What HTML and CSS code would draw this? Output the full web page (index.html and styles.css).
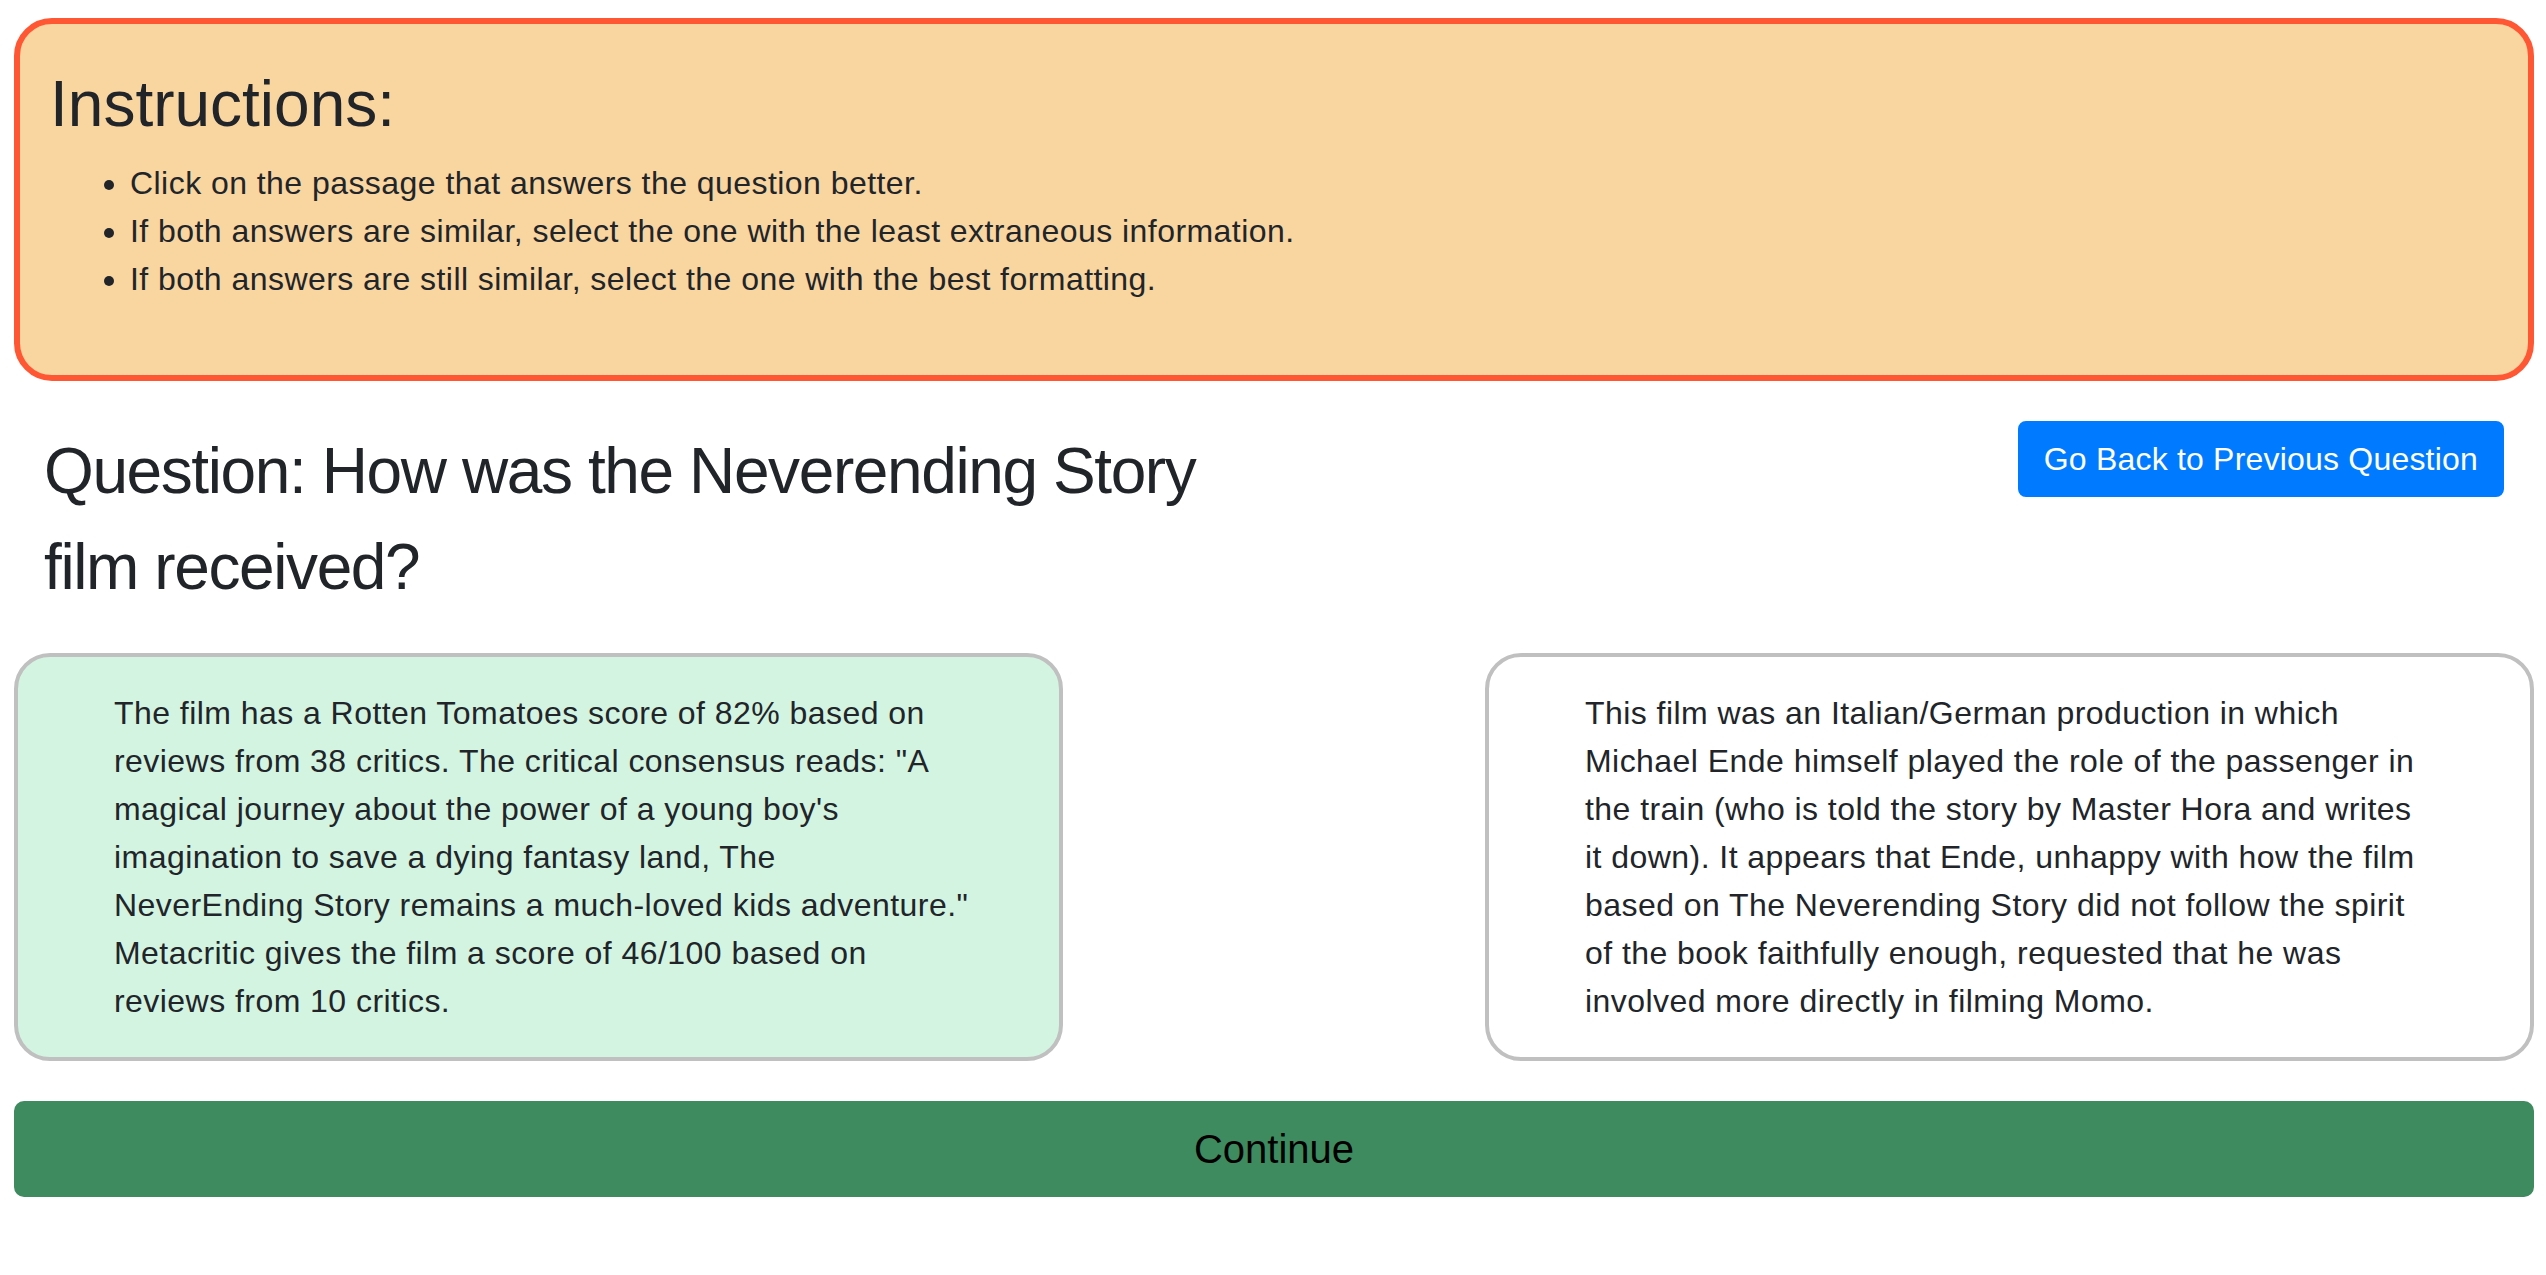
FILE: index.html
```html
<!DOCTYPE html>
<html lang="en">
<head>
<meta charset="utf-8">
<title>Passage comparison</title>
<link rel="stylesheet" href="styles.css">
</head>
<body>
<div class="page">
  <section class="instructions">
    <h2 class="instructions-title">Instructions:</h2>
    <ul class="instructions-list">
      <li>Click on the passage that answers the question better.</li>
      <li>If both answers are similar, select the one with the least extraneous information.</li>
      <li>If both answers are still similar, select the one with the best formatting.</li>
    </ul>
  </section>

  <div class="question-row">
    <h2 class="question">Question: How was the Neverending Story film received?</h2>
    <button class="btn-back" type="button">Go Back to Previous Question</button>
  </div>

  <div class="cards">
    <div class="card card-selected">
      <p class="card-text">The film has a Rotten Tomatoes score of 82% based on<br>reviews from 38 critics. The critical consensus reads: "A<br>magical journey about the power of a young boy's<br>imagination to save a dying fantasy land, The<br>NeverEnding Story remains a much-loved kids adventure."<br>Metacritic gives the film a score of 46/100 based on<br>reviews from 10 critics.</p>
    </div>
    <div class="card">
      <p class="card-text">This film was an Italian/German production in which<br>Michael Ende himself played the role of the passenger in<br>the train (who is told the story by Master Hora and writes<br>it down). It appears that Ende, unhappy with how the film<br>based on The Neverending Story did not follow the spirit<br>of the book faithfully enough, requested that he was<br>involved more directly in filming Momo.</p>
    </div>
  </div>

  <button class="btn-continue" type="button">Continue</button>
</div>
</body>
</html>
```
FILE: styles.css
```css
* {
  box-sizing: border-box;
}

body {
  margin: 0;
  font-family: "Liberation Sans", Arial, Helvetica, sans-serif;
  font-size: 32px;
  line-height: 1.5;
  color: #212529;
  background: #ffffff;
}

.page {
  padding: 18px 12px 0 14px;
}

.instructions {
  border: 6px solid #ff5733;
  border-radius: 38px;
  background: #f9d5a0;
  padding: 42px 30px 40px;
}

.instructions-title {
  margin: 0 0 16px;
  font-size: 64px;
  font-weight: 500;
  line-height: 1.2;
}

.instructions-list {
  margin: 0 0 32px;
  padding-left: 80px;
  letter-spacing: 0.45px;
}

.question-row {
  display: flex;
  justify-content: space-between;
  align-items: flex-start;
  margin-top: 40px;
  padding: 0 30px 0 30px;
}

.question {
  margin: 2px 0 0;
  max-width: 1220px;
  font-size: 64px;
  font-weight: 500;
  line-height: 96px;
  letter-spacing: -1.4px;
}

.btn-back {
  font-family: inherit;
  font-size: 32px;
  line-height: 48px;
  letter-spacing: 0.2px;
  color: #ffffff;
  background: #007bff;
  border: 2px solid #007bff;
  border-radius: 8px;
  padding: 12px 24px;
  cursor: pointer;
}

.cards {
  display: flex;
  justify-content: space-between;
  margin-top: 38px;
}

.card {
  width: 1049px;
  border: 4px solid #c0c0c0;
  border-radius: 36px;
  padding: 32px 40px 32px 96px;
  background: #ffffff;
}

.card-selected {
  background: #d4f4e2;
}

.card-text {
  margin: 0;
  letter-spacing: 0.45px;
}

.btn-continue {
  display: block;
  width: 100%;
  margin-top: 40px;
  font-family: inherit;
  font-size: 40px;
  line-height: 60px;
  color: #000000;
  background: #3e8b5f;
  border: 2px solid #3e8b5f;
  border-radius: 10px;
  padding: 16px 32px;
  cursor: pointer;
}
```
